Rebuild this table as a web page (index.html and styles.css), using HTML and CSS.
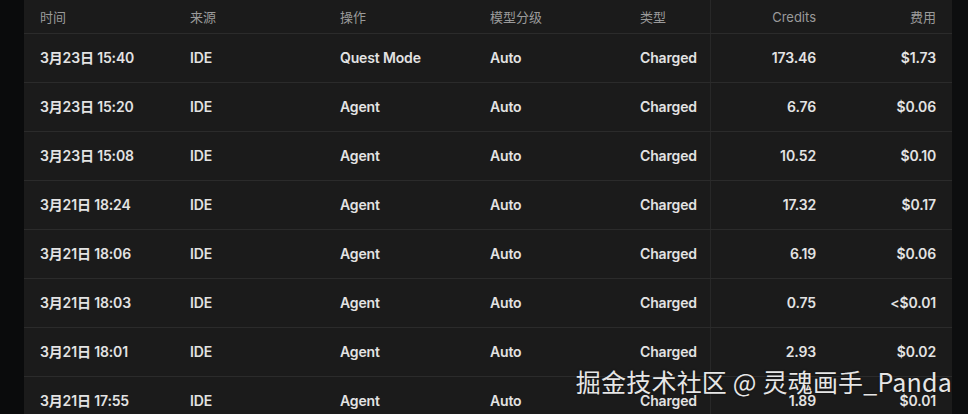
FILE: index.html
```html
<!DOCTYPE html>
<html lang="zh">
<head>
<meta charset="utf-8">
<link rel="stylesheet" href="styles.css">
</head>
<body>
<div class="page">
  <div class="gutter"></div>
  <div class="table">
    <div class="row head">
      <div class="cell">时间</div>
      <div class="cell">来源</div>
      <div class="cell">操作</div>
      <div class="cell">模型分级</div>
      <div class="cell div">类型</div>
      <div class="cell num">Credits</div>
      <div class="cell num">费用</div>
    </div>
    <div class="row"><div class="cell">3月23日 15:40</div><div class="cell">IDE</div><div class="cell">Quest Mode</div><div class="cell">Auto</div><div class="cell div">Charged</div><div class="cell num">173.46</div><div class="cell num">$1.73</div></div>
    <div class="row"><div class="cell">3月23日 15:20</div><div class="cell">IDE</div><div class="cell">Agent</div><div class="cell">Auto</div><div class="cell div">Charged</div><div class="cell num">6.76</div><div class="cell num">$0.06</div></div>
    <div class="row"><div class="cell">3月23日 15:08</div><div class="cell">IDE</div><div class="cell">Agent</div><div class="cell">Auto</div><div class="cell div">Charged</div><div class="cell num">10.52</div><div class="cell num">$0.10</div></div>
    <div class="row"><div class="cell">3月21日 18:24</div><div class="cell">IDE</div><div class="cell">Agent</div><div class="cell">Auto</div><div class="cell div">Charged</div><div class="cell num">17.32</div><div class="cell num">$0.17</div></div>
    <div class="row"><div class="cell">3月21日 18:06</div><div class="cell">IDE</div><div class="cell">Agent</div><div class="cell">Auto</div><div class="cell div">Charged</div><div class="cell num">6.19</div><div class="cell num">$0.06</div></div>
    <div class="row"><div class="cell">3月21日 18:03</div><div class="cell">IDE</div><div class="cell">Agent</div><div class="cell">Auto</div><div class="cell div">Charged</div><div class="cell num">0.75</div><div class="cell num">&lt;$0.01</div></div>
    <div class="row"><div class="cell">3月21日 18:01</div><div class="cell">IDE</div><div class="cell">Agent</div><div class="cell">Auto</div><div class="cell div">Charged</div><div class="cell num">2.93</div><div class="cell num">$0.02</div></div>
    <div class="row"><div class="cell">3月21日 17:55</div><div class="cell">IDE</div><div class="cell">Agent</div><div class="cell">Auto</div><div class="cell div">Charged</div><div class="cell num">1.89</div><div class="cell num">$0.01</div></div>
  </div>
  <div class="gutter right"></div>
  <div class="watermark">掘金技术社区 @ 灵魂画手_Panda</div>
</div>
</body>
</html>
```
FILE: styles.css
```css
html, body {
  margin: 0;
  padding: 0;
  background: #0b0c0d;
  overflow: hidden;
}
.page {
  position: relative;
  display: flex;
  width: 968px;
  height: 414px;
  overflow: hidden;
  font-family: Inter, "Noto Sans CJK SC", sans-serif;
}
.gutter {
  width: 24px;
  flex: none;
  background: #0a0b0c;
}
.gutter.right {
  width: 16px;
  background: #0d0e0f;
}
.table {
  width: 928px;
  flex: none;
  background: #1b1b1b;
}
.row {
  display: grid;
  grid-template-columns: 150px 150px 150px 150px 87px 121px 120px;
  height: 48px;
  border-bottom: 1px solid #2b2b2b;
  align-items: stretch;
}
.row.head {
  height: 33px;
}
.cell {
  display: flex;
  align-items: center;
  padding: 0 16px 2px;
  font-size: 14px;
  font-weight: 600;
  letter-spacing: -0.15px;
  color: #e3e3e3;
  white-space: nowrap;
}
.head .cell {
  font-size: 13px;
  font-weight: 400;
  letter-spacing: 0;
  padding-bottom: 0;
  color: #9a9a9a;
}
.cell.num {
  justify-content: flex-end;
}
.cell.div {
  border-right: 1px solid #282828;
}
.watermark {
  position: absolute;
  right: 16px;
  top: 363px;
  font-family: "Noto Sans CJK SC", sans-serif;
  font-size: 25px;
  font-weight: 400;
  color: #e6e6e6;
  letter-spacing: 0.2px;
  text-shadow: 0 0 2px rgba(0,0,0,0.5);
}
```
